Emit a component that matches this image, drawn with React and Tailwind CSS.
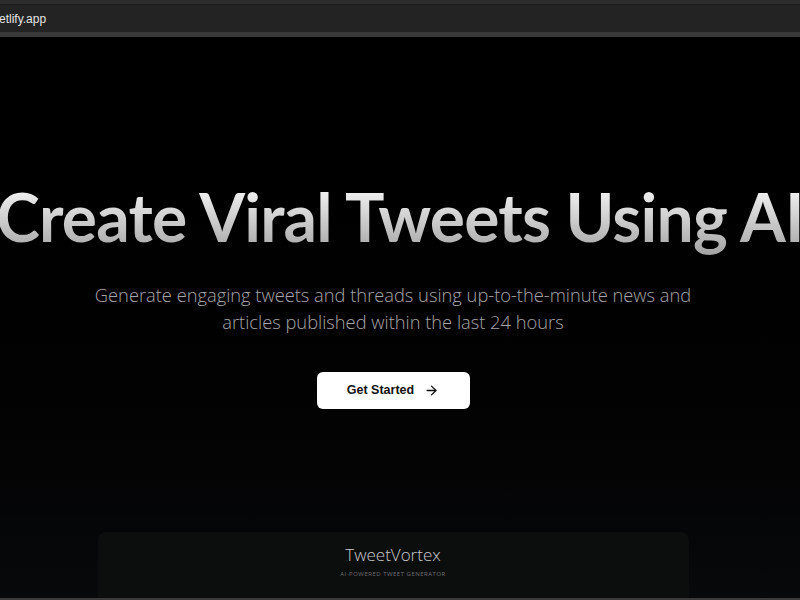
import React from 'react';

function ArrowRight() {
  return (
    <svg width="15" height="15" viewBox="0 0 24 24" fill="none" stroke="currentColor" strokeWidth="2.2" strokeLinecap="round" strokeLinejoin="round">
      <path d="M5 12h14" />
      <path d="m12 5 7 7-7 7" />
    </svg>
  );
}

export default function App() {
  return (
    <div className="w-[800px] h-[600px] overflow-hidden flex flex-col bg-black font-['Open_Sans',sans-serif]">
      {/* browser chrome */}
      <div className="shrink-0 h-[5px] bg-[#2c2c2c] border-b border-[#1c1c1c]" />
      <div className="shrink-0 h-[27px] bg-[#232323] flex items-center">
        <span className="-ml-[1px] text-[12px] text-[#e4e4e4] font-['Liberation_Sans',sans-serif]">etlify.app</span>
      </div>
      <div className="shrink-0 h-[5px] bg-[#393939]" />

      <main className="flex-1 min-h-0 flex flex-col bg-gradient-to-b from-black to-[#08090b] relative">
        <div className="flex justify-center mt-[142px] w-full">
          <h1 className="whitespace-nowrap font-['Lato',sans-serif] text-[66px] leading-[76px] font-bold tracking-[-0.8px] bg-gradient-to-b from-white to-[#a3a3a3] bg-clip-text text-transparent">
            Create Viral Tweets Using AI
          </h1>
        </div>

        <div className="flex flex-col items-center pr-[14px]">
          <p className="mt-[26px] w-[640px] text-center text-[18.3px] leading-[27px] font-light text-[#a6a6a6]">
            Generate engaging tweets and threads using up-to-the-minute news and articles published within the last 24 hours
          </p>

          <button className="mt-[37px] shrink-0 w-[153px] h-[37px] bg-white rounded-md flex items-center justify-center gap-[10px] text-[12.5px] font-bold text-[#111] font-['Liberation_Sans',sans-serif]">
            Get Started
            <ArrowRight />
          </button>

          <div className="mt-[123px] shrink-0 w-[591px] h-[90px] bg-[#0c0d0d] rounded-lg flex flex-col items-center pt-[12px]">
            <div className="text-[17px] font-light text-[#c9c9c9] leading-[22px]">TweetVortex</div>
            <div className="mt-[4px] text-[6px] tracking-[0.5px] text-[#6d6d6d] uppercase">AI-Powered Tweet Generator</div>
          </div>
        </div>
        <div className="absolute bottom-0 left-0 right-0 h-[2px] bg-[#3a3a3a]" />
      </main>
    </div>
  );
}
